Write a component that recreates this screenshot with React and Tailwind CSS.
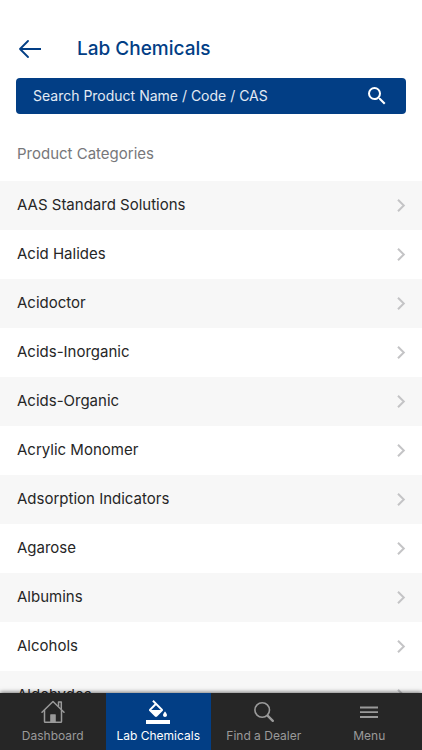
const categories = [
  "AAS Standard Solutions",
  "Acid Halides",
  "Acidoctor",
  "Acids-Inorganic",
  "Acids-Organic",
  "Acrylic Monomer",
  "Adsorption Indicators",
  "Agarose",
  "Albumins",
  "Alcohols",
  "Aldehydes",
];

function BackIcon() {
  return (
    <svg className="h-5 w-6" viewBox="0 0 24 20" fill="none" stroke="currentColor" strokeWidth="1.8" strokeLinecap="round" strokeLinejoin="round" aria-hidden="true">
      <path d="M11 2 3 10l8 8M3 10h21" />
    </svg>
  );
}

function SearchIcon() {
  return (
    <svg className="size-6" viewBox="0 0 24 24" fill="currentColor" aria-hidden="true">
      <path d="M15.5 14h-.79l-.28-.27A6.47 6.47 0 0 0 16 9.5 6.5 6.5 0 1 0 9.5 16c1.61 0 3.09-.59 4.23-1.57l.27.28v.79l5 4.99L20.49 19l-4.99-5zm-6 0C7.01 14 5 11.99 5 9.5S7.01 5 9.5 5 14 7.01 14 9.5 11.99 14 9.5 14z" />
    </svg>
  );
}

function ChevronIcon() {
  return (
    <svg className="h-4 w-2 shrink-0 overflow-visible text-[#c4c4c6]" viewBox="0 0 8 16" fill="none" stroke="currentColor" strokeWidth="2" aria-hidden="true">
      <path d="M1 1.700 6.800 7.500 1 13.300" />
    </svg>
  );
}

function HomeIcon() {
  return (
    <svg className="size-6" viewBox="0 0 24 24" fill="none" stroke="currentColor" strokeWidth="1.500" strokeLinecap="round" strokeLinejoin="round" aria-hidden="true">
      <path d="M1 12.300 12 1.500l11 10.800" />
      <path d="M3.500 10.200v11.300q0 .8.8.8h15.400q.8 0 .8-.8V10.200" />
      <path d="M17.500 6V2h2.800v6.800" />
      <path d="M9.200 22v-7.200q0-.6.6-.6h4.400q.6 0 .6.6V22z" fill="currentColor" stroke="none" />
    </svg>
  );
}

function BucketIcon() {
  return (
    <svg className="size-6" viewBox="0 0 24 24" fill="currentColor" aria-hidden="true">
      <path d="M16.56 8.94 7.62 0 6.21 1.41l2.38 2.38-5.15 5.15c-.59.59-.59 1.54 0 2.12l5.5 5.5c.29.29.68.44 1.06.44s.77-.15 1.06-.44l5.5-5.5c.59-.58.59-1.53 0-2.12zM5.21 10 10 5.21 14.79 10H5.21zM19 11.5s-2 2.17-2 3.5c0 1.1.9 2 2 2s2-.9 2-2c0-1.33-2-3.5-2-3.5zM0 20h24v4H0z" />
    </svg>
  );
}

function DealerIcon() {
  return (
    <svg className="size-6" viewBox="0 0 24 24" fill="none" stroke="currentColor" strokeLinecap="round" aria-hidden="true">
      <circle cx="10.2" cy="10" r="7.300" strokeWidth="1.6" />
      <path d="m15.800 15.800 5 5" strokeWidth="2.400" />
    </svg>
  );
}

function MenuIcon() {
  return (
    <svg className="size-6" viewBox="0 0 24 24" fill="none" stroke="currentColor" strokeWidth="1.800" aria-hidden="true">
      <path d="M3 7.500h18M3 12.200h18M3 17h18" />
    </svg>
  );
}

const tabs = [
  { label: "Dashboard", Icon: HomeIcon },
  { label: "Lab Chemicals", Icon: BucketIcon, active: true },
  { label: "Find a Dealer", Icon: DealerIcon },
  { label: "Menu", Icon: MenuIcon },
];

export default function App() {
  return (
    <div className="flex h-dvh flex-col bg-white font-['Inter','Liberation_Sans',sans-serif]">
      <header className="flex items-center gap-9 px-[17px] pt-9 pb-4 text-[#023e85]">
        <button type="button" aria-label="Back" className="flex w-6 justify-center">
          <BackIcon />
        </button>
        <h1 className="text-[19px] leading-[26px] font-medium">Lab Chemicals</h1>
      </header>

      <form role="search" onSubmit={(e) => e.preventDefault()} className="mx-4 flex h-9 shrink-0 items-center rounded bg-[#023e85] px-[17px] text-white">
        <input
          type="text"
          aria-label="Search Product Name / Code / CAS"
          placeholder="Search Product Name / Code / CAS"
          className="min-w-0 flex-1 bg-transparent text-sm outline-none placeholder:text-[#e3eaf4]"
        />
        <button type="submit" aria-label="Search">
          <SearchIcon />
        </button>
      </form>

      <h2 className="px-[17px] pt-7 pb-[15px] text-[15px] leading-6 text-[#77777a]">Product Categories</h2>

      <ul className="min-h-0 flex-1 overflow-y-auto [scrollbar-width:none]">
        {categories.map((name) => (
          <li key={name} className="odd:bg-[#f7f7f7]">
            <a href="#" className="flex h-[49px] items-center justify-between px-[17px] text-[15px] text-[#262626]">
              {name}
              <ChevronIcon />
            </a>
          </li>
        ))}
      </ul>

      <nav className="z-10 grid h-[57px] shrink-0 grid-cols-4 bg-[#262626] shadow-[0_-1px_4px_rgba(0,0,0,0.5)]">
        {tabs.map(({ label, Icon, active }) => (
          <a
            key={label}
            href="#"
            aria-current={active ? "page" : undefined}
            className={`flex flex-col items-center gap-1 pt-[7px] text-xs leading-[15px] ${active ? "bg-[#023e85] text-white" : "text-[#9a9a9a]"}`}
          >
            <Icon />
            {label}
          </a>
        ))}
      </nav>
    </div>
  );
}
